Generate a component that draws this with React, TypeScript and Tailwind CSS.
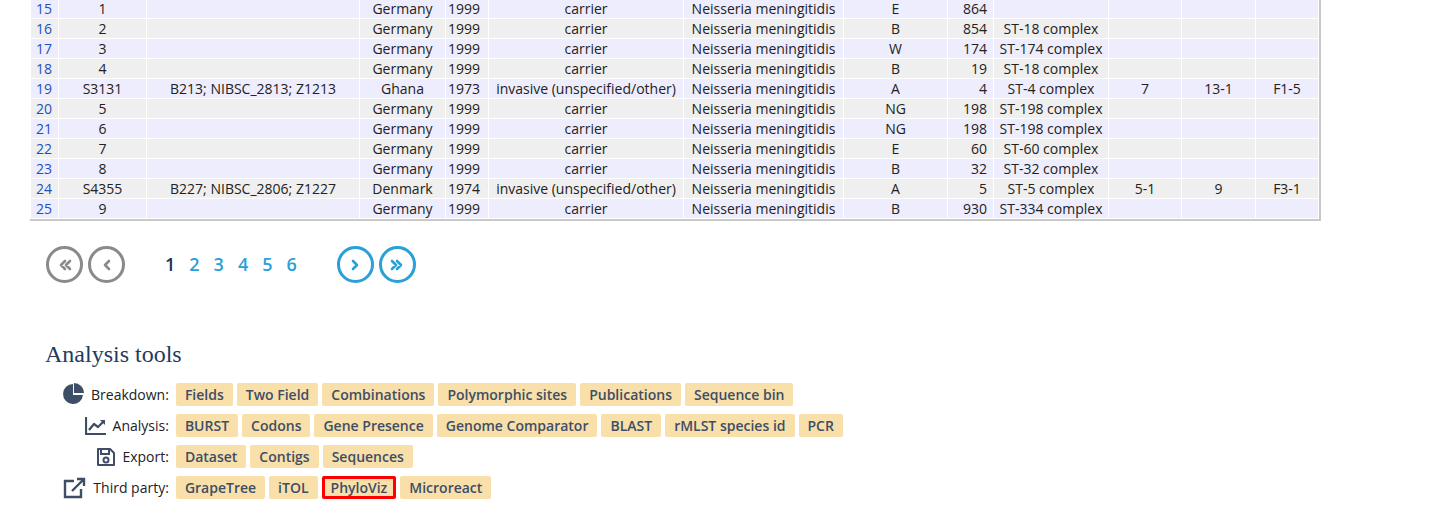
import React from "react";

const rows: string[][] = [
  ["15","1","","Germany","1999","carrier","E","864","","","",""],
  ["16","2","","Germany","1999","carrier","B","854","ST-18 complex","","",""],
  ["17","3","","Germany","1999","carrier","W","174","ST-174 complex","","",""],
  ["18","4","","Germany","1999","carrier","B","19","ST-18 complex","","",""],
  ["19","S3131","B213; NIBSC_2813; Z1213","Ghana","1973","invasive (unspecified/other)","A","4","ST-4 complex","7","13-1","F1-5"],
  ["20","5","","Germany","1999","carrier","NG","198","ST-198 complex","","",""],
  ["21","6","","Germany","1999","carrier","NG","198","ST-198 complex","","",""],
  ["22","7","","Germany","1999","carrier","E","60","ST-60 complex","","",""],
  ["23","8","","Germany","1999","carrier","B","32","ST-32 complex","","",""],
  ["24","S4355","B227; NIBSC_2806; Z1227","Denmark","1974","invasive (unspecified/other)","A","5","ST-5 complex","5-1","9","F3-1"],
  ["25","9","","Germany","1999","carrier","B","930","ST-334 complex","","",""],
];

const Btn = ({ t, red }: { t: string; red?: boolean }) => (
  <span className={`bg-[#f9dfa9] text-[#3d4e66] font-semibold text-[14px] px-[9px] h-[23px] leading-[23px] rounded-[2px] ${red ? "outline-[3px] outline outline-[#ff0000] -outline-offset-[3px]" : ""}`}>{t}</span>
);

const Circ = ({ blue, children }: { blue?: boolean; children: React.ReactNode }) => (
  <span className={`w-[37px] h-[37px] rounded-full border-[3px] flex items-center justify-center ${blue ? "border-[#2a9fd8] text-[#2a9fd8]" : "border-[#8a8a8a] text-[#8a8a8a]"}`}>{children}</span>
);

export default function App() {
  const font = { fontFamily: '"Open Sans", "DejaVu Sans", sans-serif' };
  return (
    <div className="w-[1443px] h-[529px] bg-white overflow-hidden text-[#222]" style={font}>
      <div className="ml-[30px] mt-[-2px] w-[1291px] border-r-2 border-b-2 border-[#c9c9c9]">
        <table className="border-collapse text-[14px] leading-[19px]">
          <colgroup>
            {[28, 88, 213, 86, 43, 195, 160, 104, 46, 115, 73, 74, 63].map((w, i) => (
              <col key={i} style={{ width: w }} />
            ))}
          </colgroup>
          <tbody>
            {rows.map((r, i) => (
              <tr key={i} className={i % 2 === 0 ? "bg-[#ededfd]" : "bg-[#efefef]"}>
                <td className="text-[#1d4fc4] pl-[5px] border border-white h-[20px]">{r[0]}</td>
                <td className="text-center border border-white">{r[1]}</td>
                <td className="text-center border border-white whitespace-nowrap">{r[2]}</td>
                <td className="text-center border border-white">{r[3]}</td>
                <td className="pl-[2px] border border-white">{r[4]}</td>
                <td className="text-center border border-white whitespace-nowrap">{r[5]}</td>
                <td className="text-center border border-white whitespace-nowrap">Neisseria meningitidis</td>
                <td className="text-center border border-white">{r[6]}</td>
                <td className="text-right pr-[6px] border border-white">{r[7]}</td>
                <td className="text-center border border-white whitespace-nowrap">{r[8]}</td>
                <td className="text-center border border-white">{r[9]}</td>
                <td className="text-center border border-white">{r[10]}</td>
                <td className="text-center border border-white">{r[11]}</td>
              </tr>
            ))}
          </tbody>
        </table>
      </div>

      <div className="flex items-center ml-[46px] mt-[25px] text-[18px] font-semibold">
        <div className="flex gap-[5px]">
          <Circ><svg width="18" height="18" viewBox="0 0 18 18" fill="none" stroke="currentColor" strokeWidth="2.6" strokeLinecap="round" strokeLinejoin="round"><path d="M9 5l-4 4 4 4M14 5l-4 4 4 4"/></svg></Circ>
          <Circ><svg width="18" height="18" viewBox="0 0 18 18" fill="none" stroke="currentColor" strokeWidth="2.6" strokeLinecap="round" strokeLinejoin="round"><path d="M11 5l-4 4 4 4"/></svg></Circ>
        </div>
        <div className="flex gap-[14px] ml-[40px]">
          <span className="text-[#1b3356]">1</span>
          {["2","3","4","5","6"].map(n => <span key={n} className="text-[#2a9fd8]">{n}</span>)}
        </div>
        <div className="flex gap-[5px] ml-[40px]">
          <Circ blue><svg width="18" height="18" viewBox="0 0 18 18" fill="none" stroke="currentColor" strokeWidth="2.6" strokeLinecap="round" strokeLinejoin="round"><path d="M7 5l4 4-4 4"/></svg></Circ>
          <Circ blue><svg width="18" height="18" viewBox="0 0 18 18" fill="none" stroke="currentColor" strokeWidth="2.6" strokeLinecap="round" strokeLinejoin="round"><path d="M4 5l4 4-4 4M9 5l4 4-4 4"/></svg></Circ>
        </div>
      </div>

      <div className="ml-[45px] mt-[53px] text-[24px] text-[#223a5e]" style={{ fontFamily: '"Liberation Serif", serif' }}>Analysis tools</div>

      <div className="grid grid-cols-[auto_1fr] gap-x-[7px] gap-y-[8px] ml-[62px] mt-[10px] text-[14px] text-[#222] items-center">
        <div className="flex items-center justify-end gap-[5px]">
          <svg width="24" height="24" viewBox="0 0 24 24" fill="#3d4e66"><path d="M11 2a10 10 0 1 0 10 11H11z"/><path d="M13 0v11h11A11 11 0 0 0 13 0z" transform="translate(0 1) scale(0.92)"/></svg>
          <span>Breakdown:</span>
        </div>
        <div className="flex gap-[4px]">{["Fields","Two Field","Combinations","Polymorphic sites","Publications","Sequence bin"].map(t => <Btn key={t} t={t} />)}</div>
        <div className="flex items-center justify-end gap-[6px]">
          <svg width="22" height="20" viewBox="0 0 22 20" fill="none" stroke="#3d4e66" strokeWidth="2.2"><path d="M1 1v17h20"/><path d="M4 14l5-6 4 3 6-6" strokeLinejoin="round"/><path d="M15 4h5v5" fill="#3d4e66" stroke="none"/></svg>
          <span>Analysis:</span>
        </div>
        <div className="flex gap-[4px]">{["BURST","Codons","Gene Presence","Genome Comparator","BLAST","rMLST species id","PCR"].map(t => <Btn key={t} t={t} />)}</div>
        <div className="flex items-center justify-end gap-[6px]">
          <svg width="20" height="20" viewBox="0 0 20 20" fill="none" stroke="#3d4e66" strokeWidth="2"><path d="M2 2h12l4 4v12H2z" strokeLinejoin="round"/><path d="M5 2v5h8V2"/><circle cx="10" cy="13" r="2.5"/></svg>
          <span>Export:</span>
        </div>
        <div className="flex gap-[4px]">{["Dataset","Contigs","Sequences"].map(t => <Btn key={t} t={t} />)}</div>
        <div className="flex items-center justify-end gap-[6px]">
          <svg width="24" height="22" viewBox="0 0 24 22" fill="none" stroke="#3d4e66" strokeWidth="2.4"><path d="M11 4H2v16h16v-8"/><path d="M9 14L21 2M14 2h7v7"/></svg>
          <span>Third party:</span>
        </div>
        <div className="flex gap-[4px]">{["GrapeTree","iTOL","PhyloViz","Microreact"].map(t => <Btn key={t} t={t} red={t === "PhyloViz"} />)}</div>
      </div>
    </div>
  );
}
